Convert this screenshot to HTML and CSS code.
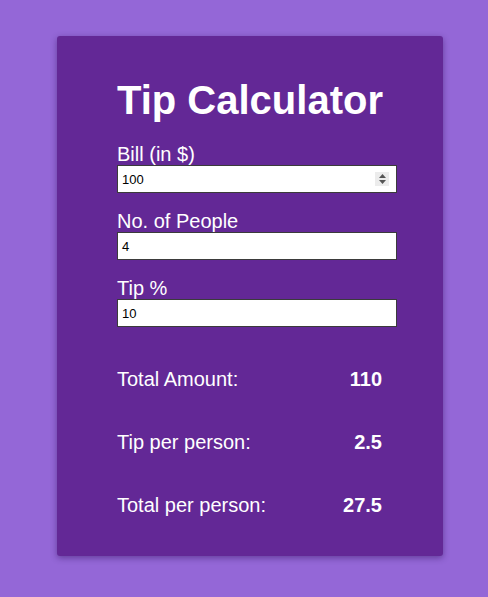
FILE: index.html
```html
<!DOCTYPE html>
<html>
<head>
<meta charset="utf-8">
<link rel="stylesheet" href="styles.css">
</head>
<body>
<div class="card">
  <h1 class="title">Tip Calculator</h1>
  <div class="field">
    <label class="label" for="bill">Bill (in $)</label>
    <div class="input number">
      <span>100</span>
      <span class="spin"><svg width="9" height="12" viewBox="0 0 9 12"><path d="M4.5 1 L8 5 L1 5 Z M4.5 11 L8 7 L1 7 Z" fill="#555"/></svg></span>
    </div>
  </div>
  <div class="field">
    <label class="label">No. of People</label>
    <div class="input"><span>4</span></div>
  </div>
  <div class="field">
    <label class="label">Tip %</label>
    <div class="input"><span>10</span></div>
  </div>
  <div class="results">
    <div class="row"><span>Total Amount:</span><span class="val">110</span></div>
    <div class="row"><span>Tip per person:</span><span class="val">2.5</span></div>
    <div class="row"><span>Total per person:</span><span class="val">27.5</span></div>
  </div>
</div>
</body>
</html>
```
FILE: styles.css
```css
html, body {
  margin: 0;
  padding: 0;
}
body {
  background: #9467d7;
  font-family: "Liberation Sans", Arial, sans-serif;
  color: #fff;
  width: 488px;
  height: 597px;
  overflow: hidden;
}
.card {
  margin: 36px 0 0 57px;
  width: 386px;
  height: 520px;
  box-sizing: border-box;
  background: #632896;
  border-radius: 3px;
  box-shadow: 0 2px 6px rgba(40, 10, 80, 0.45);
  padding: 40px 46px 0 60px;
  display: flex;
  flex-direction: column;
}
.title {
  margin: 0 0 19px;
  font-size: 40px;
  font-weight: bold;
  line-height: 48px;
}
.field {
  display: flex;
  flex-direction: column;
}
.label {
  font-size: 20px;
  line-height: 22px;
}
.field + .field .label {
  margin-top: 17px;
}
.input {
  height: 28px;
  box-sizing: border-box;
  border: 1px solid #3b3b3b;
  background: #fff;
  color: #000;
  font-size: 13px;
  display: flex;
  align-items: center;
  justify-content: space-between;
  padding: 0 7px 0 4px;
}
.spin {
  width: 14px;
  height: 14px;
  background: #ececec;
  display: flex;
  align-items: center;
  justify-content: center;
}
.results {
  margin-top: 41px;
  display: flex;
  flex-direction: column;
  gap: 41px;
  width: 265px;
}
.row {
  display: flex;
  justify-content: space-between;
  font-size: 20px;
  line-height: 22px;
}
.val {
  font-weight: bold;
}
```
